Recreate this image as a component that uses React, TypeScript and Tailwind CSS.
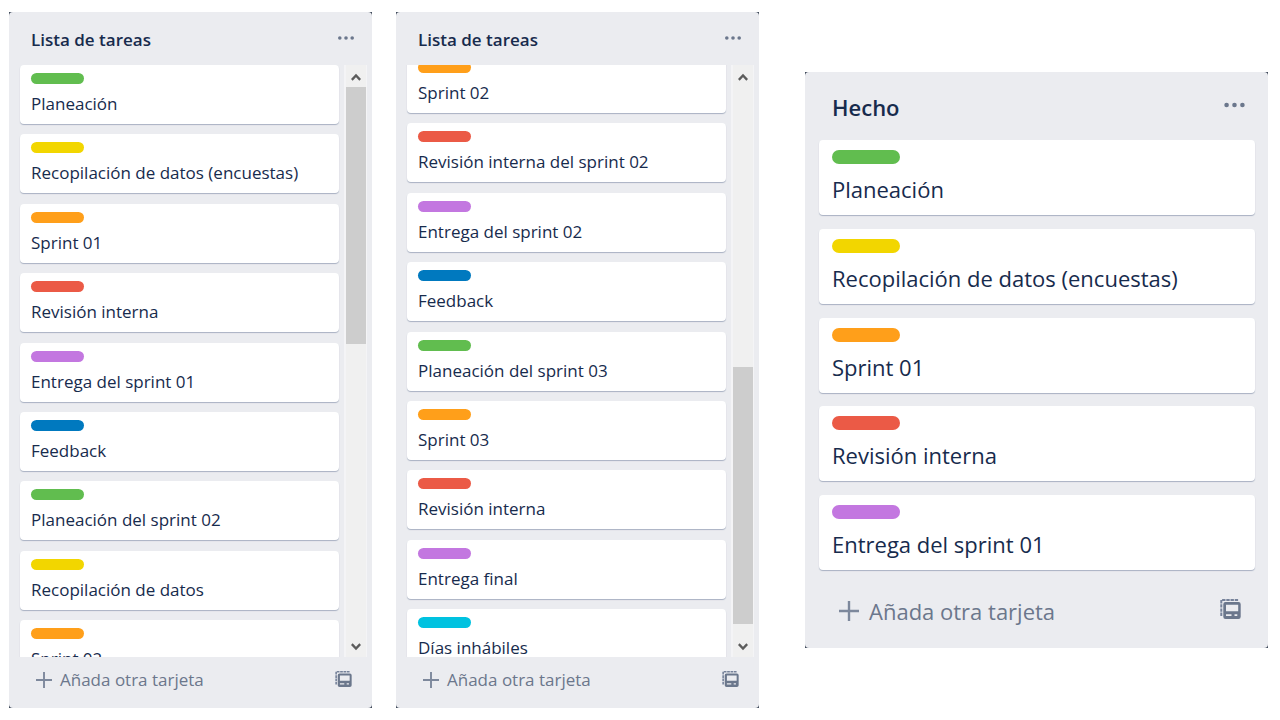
import { ReactNode } from "react";

type Card = { color: string; title: string };

const GREEN = "bg-[#61bd4f]";
const YELLOW = "bg-[#f2d600]";
const ORANGE = "bg-[#ff9f1a]";
const RED = "bg-[#eb5a46]";
const PURPLE = "bg-[#c377e0]";
const BLUE = "bg-[#0079bf]";
const SKY = "bg-[#00c2e0]";

const pending: Card[] = [
  { color: GREEN, title: "Planeación" },
  { color: YELLOW, title: "Recopilación de datos (encuestas)" },
  { color: ORANGE, title: "Sprint 01" },
  { color: RED, title: "Revisión interna" },
  { color: PURPLE, title: "Entrega del sprint 01" },
  { color: BLUE, title: "Feedback" },
  { color: GREEN, title: "Planeación del sprint 02" },
  { color: YELLOW, title: "Recopilación de datos" },
  { color: ORANGE, title: "Sprint 02" },
];

const upcoming: Card[] = [
  { color: ORANGE, title: "Sprint 02" },
  { color: RED, title: "Revisión interna del sprint 02" },
  { color: PURPLE, title: "Entrega del sprint 02" },
  { color: BLUE, title: "Feedback" },
  { color: GREEN, title: "Planeación del sprint 03" },
  { color: ORANGE, title: "Sprint 03" },
  { color: RED, title: "Revisión interna" },
  { color: PURPLE, title: "Entrega final" },
  { color: SKY, title: "Días inhábiles" },
];

const done: Card[] = pending.slice(0, 5);

function Dots({ className }: { className: string }) {
  return (
    <svg viewBox="0 0 18 6" className={className} fill="#6b778c" aria-hidden="true">
      <circle cx="2.8" cy="3" r="1.8" />
      <circle cx="9" cy="3" r="1.8" />
      <circle cx="15.2" cy="3" r="1.8" />
    </svg>
  );
}

function Plus({ className }: { className: string }) {
  return (
    <svg viewBox="0 0 16 16" className={className} stroke="#7d889c" strokeWidth="1.9" aria-hidden="true">
      <path d="M8 0v16M0 8h16" />
    </svg>
  );
}

function TemplateIcon({ className }: { className: string }) {
  return (
    <svg viewBox="0 0 21 20" className={className} fill="#6b778c" aria-hidden="true">
      <path d="M1.3 17V1H18.5" fill="none" stroke="#76829a" strokeWidth="2" strokeDasharray="3.4 .8" />
      <path
        fillRule="evenodd"
        d="M5.5 3h13a2.2 2.2 0 0 1 2.2 2.2v12.600a2.200 2.200 0 0 1-2.200 2.200h-13a2.200 2.200 0 0 1-2.200-2.200V5.200A2.200 2.200 0 0 1 5.500 3ZM6 5.700V12.300H18.200V5.700ZM6 15.200v1.800h5.500v-1.800ZM14.500 15.200v1.800h2.800v-1.800Z"
      />
    </svg>
  );
}

function Chevron({ down = false }: { down?: boolean }) {
  return (
    <svg viewBox="0 0 10 8" className="h-2 w-2.5" fill="none" stroke="#5c5c5c" strokeWidth="2.4" aria-hidden="true">
      <path d={down ? "M.8 1.2 5 5.6 9.2 1.2" : "M.8 6.8 5 2.4 9.2 6.8"} />
    </svg>
  );
}

function ScrollBar({ atEnd = false }: { atEnd?: boolean }) {
  return (
    <div className="flex w-[23px] flex-col border-r border-l-2 border-[#f4f4f6] bg-[#f0f0f0]">
      <button type="button" aria-label="Subir" className="flex h-[22px] shrink-0 items-center justify-center pt-0.5">
        <Chevron />
      </button>
      <div className={atEnd ? "flex flex-1 flex-col justify-end pb-3" : "flex flex-1 flex-col"}>
        <div className="h-[257px] bg-[#cdcdcd]" />
      </div>
      <button type="button" aria-label="Bajar" className="flex h-[21px] shrink-0 items-center justify-center">
        <Chevron down />
      </button>
    </div>
  );
}

function Panel({ className, children }: { className: string; children: ReactNode }) {
  return (
    <div className={`bg-[#3f4a5a] ${className}`}>
      <section className="rounded-[4px] bg-[#ebecf0]">{children}</section>
    </div>
  );
}

function TallList({ cards, scrolled = false }: { cards: Card[]; scrolled?: boolean }) {
  return (
    <Panel className="mt-3">
      <header className="flex h-[53px] items-center justify-between pt-0.5 pr-[17px] pl-[22px]">
        <h2 className="text-[17px] leading-6 font-semibold">Lista de tareas</h2>
        <button type="button" aria-label="Acciones de la lista" className="pb-1">
          <Dots className="h-1.5 w-[18px]" />
        </button>
      </header>
      <div className="flex h-[592px] justify-between overflow-hidden pr-[5px] pl-[11px]">
        <ul className={`flex h-[614px] min-w-0 flex-1 flex-col justify-between ${scrolled ? "-mt-[11px]" : ""}`}>
          {cards.map((card) => (
            <li key={card.title} className="h-[59px] rounded-[4px] bg-white px-[11px] pt-2 shadow-[0_1px_1px_#a9b1c2]">
              <div className={`h-[11px] w-[53px] rounded-full ${card.color}`} />
              <p className="mt-2 text-[17px] leading-6">{card.title}</p>
            </li>
          ))}
        </ul>
        <div className="ml-[5px] flex">
          <ScrollBar atEnd={scrolled} />
        </div>
      </div>
      <footer className="flex h-[51px] items-start justify-between pt-[11px] pr-5 pl-[27px] text-[#6b778c]">
        <button type="button" className="flex items-center gap-2 text-[17px] leading-6">
          <Plus className="size-4" />
          Añada otra tarjeta
        </button>
        <button type="button" aria-label="Crear desde plantilla" className="pt-[3px]">
          <TemplateIcon className="h-4 w-[17px]" />
        </button>
      </footer>
    </Panel>
  );
}

function DoneList() {
  return (
    <Panel className="mt-[72px] ml-[22px]">
      <header className="flex h-[68px] items-center justify-between pt-0.5 pr-[22px] pl-[27px]">
        <h2 className="text-[22px] leading-8 font-semibold">Hecho</h2>
        <button type="button" aria-label="Acciones de la lista" className="pb-1">
          <Dots className="h-2 w-[23px]" />
        </button>
      </header>
      <ul className="flex h-[430px] flex-col justify-between pr-[13px] pl-[14px]">
        {done.map((card) => (
          <li key={card.title} className="h-[75px] rounded-[4px] bg-white px-[13px] pt-2.5 shadow-[0_1px_1px_#a9b1c2]">
            <div className={`h-[14px] w-[68px] rounded-full ${card.color}`} />
            <p className="mt-[9px] text-[22px] leading-8">{card.title}</p>
          </li>
        ))}
      </ul>
      <footer className="flex h-[78px] items-start justify-between pt-[25px] pr-[27px] pl-[34px] text-[#6b778c]">
        <button type="button" className="flex items-center gap-2.5 text-[22px] leading-8">
          <Plus className="size-5" />
          Añada otra tarjeta
        </button>
        <button type="button" aria-label="Crear desde plantilla" className="pt-1">
          <TemplateIcon className="h-5 w-[21px]" />
        </button>
      </footer>
    </Panel>
  );
}

export default function App() {
  return (
    <main className="grid min-h-screen grid-cols-[363fr_363fr_485fr] items-start gap-6 bg-white pr-3 pl-[9px] font-['Open_Sans','Noto_Sans',sans-serif] text-[#172b4d]">
      <TallList cards={pending} />
      <TallList cards={upcoming} scrolled />
      <DoneList />
    </main>
  );
}
